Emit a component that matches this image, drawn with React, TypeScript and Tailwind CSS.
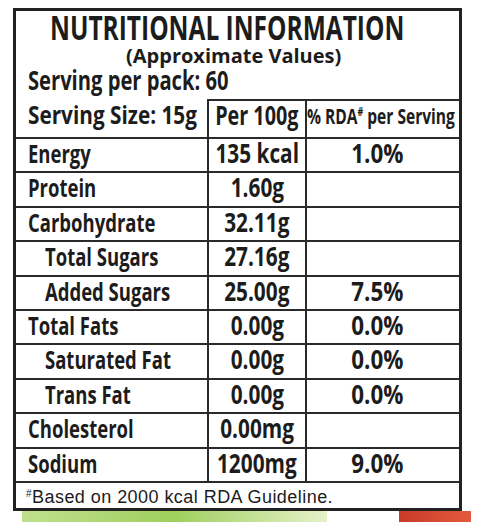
import React from 'react';

const rows = [
  { name: 'Energy', per100: '135 kcal', rda: '1.0%', indent: false },
  { name: 'Protein', per100: '1.60g', rda: '', indent: false },
  { name: 'Carbohydrate', per100: '32.11g', rda: '', indent: false },
  { name: 'Total Sugars', per100: '27.16g', rda: '', indent: true },
  { name: 'Added Sugars', per100: '25.00g', rda: '7.5%', indent: true },
  { name: 'Total Fats', per100: '0.00g', rda: '0.0%', indent: false },
  { name: 'Saturated Fat', per100: '0.00g', rda: '0.0%', indent: true },
  { name: 'Trans Fat', per100: '0.00g', rda: '0.0%', indent: true },
  { name: 'Cholesterol', per100: '0.00mg', rda: '', indent: false },
  { name: 'Sodium', per100: '1200mg', rda: '9.0%', indent: false },
];

// condensed look: Open Sans bold squeezed horizontally
const Sq = ({ children, className = '' }: { children: React.ReactNode; className?: string }) => (
  <span className={`inline-block whitespace-nowrap ${className}`}>{children}</span>
);

const App = () => {
  return (
    <div className="w-[480px] h-[522px] bg-white overflow-hidden flex flex-col">
      <div className="pt-2 pl-[13px]">
        <div className="w-[449px] border-[3px] border-[#222] text-[#1c1c1c] font-['Open_Sans',sans-serif] font-bold">
          {/* Heading */}
          <div className="h-[88px] flex flex-col">
            <div className="pl-[34px] text-[34px] leading-[28px] mt-[2px]">
              <Sq className="scale-x-[0.72] origin-left">NUTRITIONAL INFORMATION</Sq>
            </div>
            <div className="pl-[110px] text-[20px] leading-[22px] mt-[4px]">
              <Sq>(Approximate Values)</Sq>
            </div>
            <div className="pl-[12px] text-[26px] leading-[28px] -mt-[1px]">
              <Sq className="scale-x-[0.775] origin-left">Serving per pack: 60</Sq>
            </div>
          </div>

          {/* Table head */}
          <div className="grid grid-cols-[191px_98px_154px] h-[40px]">
            <div className="pl-[12px] text-[25px] leading-[30px] border-b-2 border-[#2a2a2a]">
              <Sq className="scale-x-[0.83] origin-left">Serving Size: 15g</Sq>
            </div>
            <div className="border-t-2 border-l-2 border-b-2 border-[#2a2a2a] flex justify-center text-[26px] leading-[28px]">
              <Sq className="scale-x-[0.76]">Per 100g</Sq>
            </div>
            <div className="border-t-2 border-l-2 border-b-2 border-[#2a2a2a] flex justify-center pr-[4px] text-[21px] leading-[30px]">
              <Sq className="scale-x-[0.74]">
                % RDA<sup className="text-[12px] -top-[0.7em]">#</sup> per Serving
              </Sq>
            </div>
          </div>

          {/* Rows */}
          {rows.map((r) => (
            <div key={r.name} className="grid grid-cols-[191px_98px_154px] h-[34.4px] border-b-2 border-[#2a2a2a] leading-[28px]">
              <div className={`text-[25px] ${r.indent ? 'pl-[29px]' : 'pl-[12px]'}`}>
                <Sq className="scale-x-[0.74] origin-left">{r.name}</Sq>
              </div>
              <div className="border-l-2 border-[#2a2a2a] flex justify-center text-[26px]">
                <Sq className="scale-x-[0.8]">{r.per100}</Sq>
              </div>
              <div className="border-l-2 border-[#2a2a2a] flex justify-center pr-3 text-[26px]">
                <Sq className="scale-x-[0.86]">{r.rda}</Sq>
              </div>
            </div>
          ))}

          {/* Footnote */}
          <div className="h-[25px] pt-[2px] pl-[10px] font-normal font-['Liberation_Sans',Arial,sans-serif] text-[18px] leading-[25px] tracking-[0.45px] whitespace-nowrap">
            <sup className="text-[10px] -top-[0.6em]">#</sup>Based on 2000 kcal RDA Guideline.
          </div>
        </div>
      </div>

      {/* strip of the photo showing below the label */}
      <div className="flex h-[11px] pl-[22px]">
        <div className="w-[305px] bg-gradient-to-r from-[#bfe08e] via-[#9fcf5c] to-[#e6f1c8]" />
        <div className="w-[72px]" />
        <div className="w-[72px] bg-gradient-to-r from-[#c93a28] to-[#e25a3e]" />
      </div>
    </div>
  );
};

export default App;
